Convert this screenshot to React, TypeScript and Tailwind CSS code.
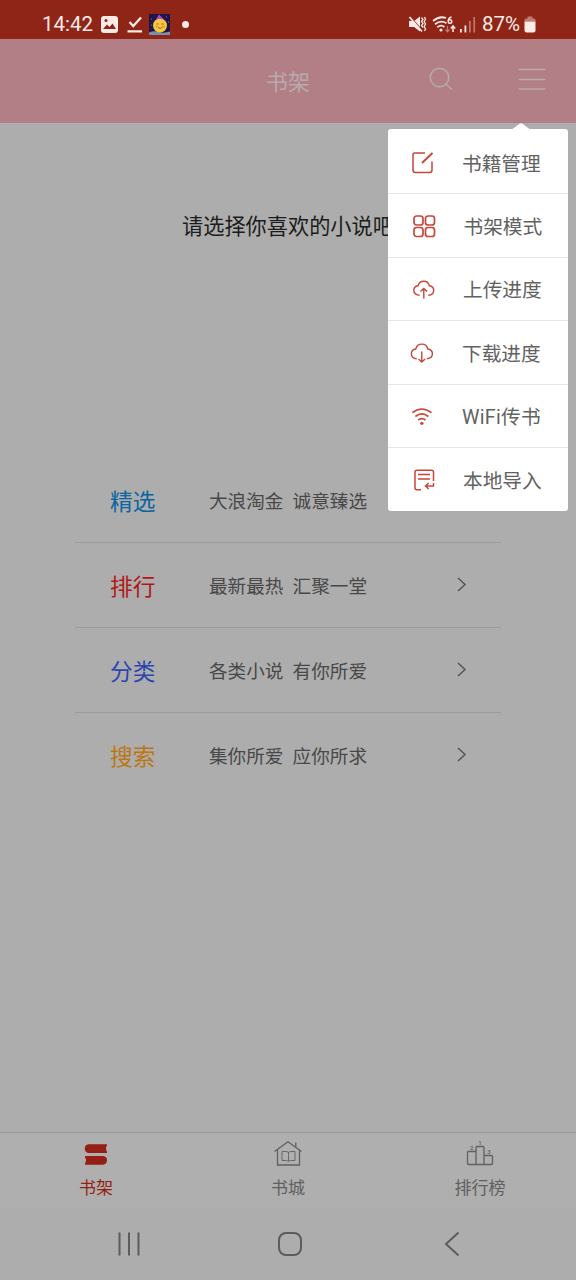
import React from 'react';
import type { ReactNode } from 'react';

interface MenuEntry {
  label: string;
  icon: ReactNode;
  className: string;
}

interface GuideEntry {
  title: string;
  desc: string;
  color: string;
  showArrow: boolean;
}

interface TabEntry {
  label: string;
  icon: ReactNode;
  color: string;
}

const menuEntries: MenuEntry[] = [
  {
    label: '书籍管理',
    className: 'h-[65px] pt-[3px] pl-[23px] gap-[27px]',
    icon: (
      <>
        <path d="M14 2H4Q2 2 2 4V19Q2 21.500 4.500 21.500H18.500Q21 21.500 21 19V10.500" />
        <path d="M11 12L21.500 2" strokeWidth="1.900" />
      </>
    ),
  },
  {
    label: '书架模式',
    className: 'h-[64px] pl-[24px] gap-[27.5px]',
    icon: (
      <g strokeWidth="1.700">
        <rect x="2" y="2" width="9" height="9" rx="2.500" />
        <rect x="13.500" y="2" width="9" height="9" rx="2.500" />
        <rect x="2" y="13.500" width="9" height="9" rx="2.500" />
        <rect x="13.500" y="13.500" width="9" height="9" rx="2.500" />
      </g>
    ),
  },
  {
    label: '上传进度',
    className: 'h-[63px] pl-[24px] gap-[27px]',
    icon: (
      <g strokeWidth="1.400">
        <path d="M7.500 18.200C4.300 18.200 1.800 16.200 1.800 13.500C1.800 10.900 3.500 9.100 6 8.800C6.700 5.800 8.900 4.200 11.700 4.200C14.600 4.200 16.800 5.900 17.400 8.800C20 9.100 21.700 10.900 21.700 13.500C21.700 16.200 19.500 18 16.300 18.200" />
        <path d="M11.800 21.500V11.500M8.500 14.600L11.800 11.500L15.100 14.600" />
      </g>
    ),
  },
  {
    label: '下载进度',
    className: 'h-[64px] pl-[22px] gap-[28px]',
    icon: (
      <g strokeWidth="1.400">
        <path d="M6.800 17.700C3.700 17.500 1.400 15.500 1.400 12.700C1.400 10.100 3.200 8.300 5.700 8C6.500 4.800 8.800 3.100 11.800 3.100C14.800 3.100 17.200 4.900 17.800 8C20.500 8.300 22.400 10.200 22.400 12.800C22.400 15.600 20.100 17.500 16.900 17.700" />
        <path d="M11.800 10.500V20.900M8.500 18.100L11.800 21.100L15.100 18.100" />
      </g>
    ),
  },
  {
    label: 'WiFi传书',
    className: 'h-[63px] pl-[22px] gap-[28px] tracking-[0.3px]',
    icon: (
      <g strokeWidth="1.700">
        <path d="M2.300 8.700Q11.900 1.300 21.500 8.700" />
        <path d="M5.400 12.500Q11.900 7.400 18.400 12.500" />
        <path d="M8.300 16Q11.900 13.100 15.500 16" />
        <circle cx="11.900" cy="19.300" r="1.600" fill="currentColor" stroke="none" />
      </g>
    ),
  },
  {
    label: '本地导入',
    className: 'h-[63px] pl-[24px] gap-[27px]',
    icon: (
      <>
        <path d="M21.500 13V4Q21.500 2.200 19.500 2.200H5Q3 2.200 3 4.200V19.800Q3 21.800 5 21.800H9" />
        <path d="M6 6.500H18M6 11H18" />
        <path d="M21.500 15V18H13.500M16.700 15L13.500 18L16.700 21" />
      </>
    ),
  },
];

const guideEntries: GuideEntry[] = [
  { title: '精选', desc: '大浪淘金  诚意臻选', color: 'text-[#0b64a0]', showArrow: false },
  { title: '排行', desc: '最新最热  汇聚一堂', color: 'text-[#b01818]', showArrow: true },
  { title: '分类', desc: '各类小说  有你所爱', color: 'text-[#2c45ae]', showArrow: true },
  { title: '搜索', desc: '集你所爱  应你所求', color: 'text-[#bd7512]', showArrow: true },
];

const tabs: TabEntry[] = [
  {
    label: '书架',
    color: 'text-[#951f14]',
    icon: (
      <g fill="currentColor" stroke="none">
        <path d="M7.500 4.300H26V5.300Q24 8.500 26 11.800V13H7.500Q3.800 12.500 3.800 8.600Q3.800 4.700 7.500 4.300Z" />
        <path d="M22 16H4V17.200Q6 20.200 4 23.400V24.700H22Q26 24.200 26 20.300Q26 16.500 22 16Z" />
      </g>
    ),
  },
  {
    label: '书城',
    color: 'text-[#606060]',
    icon: (
      <g strokeWidth="1.300">
        <path d="M1.500 11.500L15 1.800L28.500 11.500" />
        <path d="M4.500 10V25H26.500V10" />
        <path d="M22.800 7V2.500" />
        <path d="M9 11.500H13.500L15.500 12.300L17.500 11.500H22V20.500H17.500L15.500 21.300L13.500 20.500H9ZM15.500 12.300V21" strokeWidth="0.900" />
      </g>
    ),
  },
  {
    label: '排行榜',
    color: 'text-[#606060]',
    icon: (
      <g strokeWidth="1.300">
        <path d="M11 24.500H3.500Q2.500 24.500 2.500 23.500V12.500Q2.500 11.500 3.500 11.500H11" />
        <path d="M11 24.500V7.500Q11 6.500 12 6.500H18Q19 6.500 19 7.500V24.500Z" />
        <path d="M19 15.500H26.500Q27.500 15.500 27.500 16.500V23.500Q27.500 24.500 26.500 24.500H19" />
        <g fill="currentColor" stroke="none" fontFamily="Roboto, sans-serif" fontSize="6" fontWeight="500">
          <text x="5" y="10">2</text>
          <text x="13.300" y="5">1</text>
          <text x="22.300" y="14">3</text>
        </g>
      </g>
    ),
  },
];

function StatusBar() {
  return (
    <div className="flex h-[39px] items-start justify-between bg-[#8f2517] pl-[42px] pr-[40px] pt-[9px] text-[20.5px] leading-[30px] text-[#fbeae6]">
      <div className="flex h-[30px] items-center">
        <span className="w-[50px] whitespace-nowrap">14:42</span>
        <svg className="ml-[9px]" width="17" height="17" viewBox="0 0 17 17">
          <rect width="17" height="17" rx="3" fill="currentColor" />
          <path d="M2 13L6 8.500L8.500 11L11.500 7.500L15 13Z" fill="#8f2517" />
          <circle cx="5" cy="4.500" r="1.500" fill="#8f2517" />
        </svg>
        <svg className="ml-[9px]" width="16" height="18" viewBox="0 0 16 18" fill="none" stroke="currentColor" strokeWidth="2.300">
          <path d="M2.500 7L6.300 11L14 2.500M0.500 16.300H15" />
        </svg>
        <svg className="ml-[6px]" width="21" height="21" viewBox="0 0 21 21">
          <rect width="21" height="21" fill="#1f1548" />
          <path d="M0 18.500Q5 16.500 10 18T21 17.500V21H0Z" fill="#7791aa" />
          <circle cx="11" cy="11.500" r="7" fill="#f5c93d" />
          <path d="M7 5.500L10 0.500L15.500 6Q11 3.800 7 5.500Z" fill="#b64bc7" />
          <path d="M7.500 10H9.500M12.500 10H14.500M9 13.500Q11.500 15.500 13.500 13" stroke="#a45b24" fill="none" />
          <circle cx="7.500" cy="12.500" r="1" fill="#ee8b45" />
          <circle cx="15" cy="12.500" r="1" fill="#ee8b45" />
          <path d="M2 5H3M17 3H18M2 11H3M19 8H20" stroke="#7c75b7" />
        </svg>
        <span className="ml-[12px] size-[7px] rounded-full bg-[#fbeae6]" />
      </div>
      <div className="flex h-[30px] items-center">
        <svg width="18" height="18" viewBox="0 0 18 18" fill="none" stroke="currentColor" strokeWidth="1.700">
          <path d="M0 6H5L11 1.500V16.500L5 12H0Z" fill="currentColor" stroke="none" />
          <path d="M1.500 2L14 16.500" stroke="#8f2517" strokeWidth="1.200" />
          <path d="M0.500 2L13 16.500" />
          <path d="M12.500 2.500L14 4.500L12.500 6.500L14 8.500L12.500 10.500L14 12.500M15.500 2L16.500 4.500L15.200 6.500L16.500 9L15.200 11.500L16.500 14L15.500 16" strokeWidth="1.300" />
        </svg>
        <svg className="ml-[5px] mr-px" width="25" height="19" viewBox="0 0 25 19" fill="none" stroke="currentColor" strokeWidth="1.800">
          <path d="M1 6Q7.500 0.500 14 3M3 9.300Q9 4.500 14.500 8.200M5.300 12.300Q9 9.200 12.500 12" />
          <circle cx="9" cy="15" r="1.600" fill="currentColor" stroke="none" />
          <path d="M19.500 2Q16.500 2.500 16.200 6" strokeWidth="1.400" />
          <circle cx="18" cy="6.500" r="1.800" strokeWidth="1.400" />
          <path d="M15.500 11V16.500M13.500 14.500L15.500 16.800L17.500 14.500" strokeWidth="1.200" opacity="0.450" />
          <path d="M21 17V11.500M18.800 13.500L21 11L23.200 13.500" strokeWidth="1.500" />
        </svg>
        <svg className="ml-[2px] mr-px" width="16" height="17" viewBox="0 0 16 17" fill="currentColor">
          <rect y="13" width="1.800" height="3.500" />
          <rect x="4.500" y="9.500" width="1.800" height="7" />
          <rect x="9" y="5" width="1.800" height="11.500" opacity="0.400" />
          <rect x="13.300" y="1" width="1.800" height="15.500" opacity="0.400" />
        </svg>
        <span className="ml-[5px] mr-px w-[40px] whitespace-nowrap text-[20.5px]">87%</span>
        <svg className="ml-[1px]" width="12" height="17" viewBox="0 0 12 17" fill="currentColor">
          <path d="M3.500 0.500H8.500V2.500H10Q11.500 2.500 11.500 4V5.500H0.500V4Q0.500 2.500 2 2.500H3.500Z" opacity="0.450" />
          <path d="M0.500 5.500H11.500V14.500Q11.500 16.500 9.500 16.500H2.500Q0.500 16.500 0.500 14.500Z" />
        </svg>
      </div>
    </div>
  );
}

function Header() {
  return (
    <header className="grid h-[84px] grid-cols-3 items-center bg-[#b37f86] text-[#b6abac]">
      <h1 className="col-start-2 pt-[4px] text-center text-[22px] leading-[32px]">书架</h1>
      <div className="flex items-center justify-between pl-[44px] pr-[30.5px] pb-[4px]">
        <svg width="26" height="26" viewBox="0 0 26 26" fill="none" stroke="currentColor" strokeWidth="1.500">
          <circle cx="11.500" cy="11.500" r="9.300" />
          <path d="M18 18L24 23.500" />
        </svg>
        <svg width="28" height="24" viewBox="0 0 28 24" fill="none" stroke="currentColor" strokeWidth="1.500">
          <path d="M0.500 2.500H27.500M0.500 12.500H27.500M0.500 22H27.500" />
        </svg>
      </div>
    </header>
  );
}

function PopupMenu() {
  return (
    <div className="absolute left-[388px] top-[123px] w-[180px]">
      <svg className="ml-[124px] block" width="18" height="6" viewBox="0 0 18 6">
        <path d="M0.500 6L7.500 0.700Q9 -0.300 10.500 0.700L17.500 6Z" fill="#fff" />
      </svg>
      <ul className="overflow-hidden rounded-[3px] bg-white">
        {menuEntries.map((entry) => (
          <li
            key={entry.label}
            className={`flex items-center border-b border-[#e6e6e6] last:border-b-0 ${entry.className}`}
          >
            <svg
              className="shrink-0 text-[#c74638]"
              width="24"
              height="24"
              viewBox="0 0 24 24"
              fill="none"
              stroke="currentColor"
              strokeWidth="1.500"
            >
              {entry.icon}
            </svg>
            <span className="whitespace-nowrap pt-[4px] text-[19.7px] leading-[28px] text-[#626262]">
              {entry.label}
            </span>
          </li>
        ))}
      </ul>
    </div>
  );
}

function GuideList() {
  return (
    <ul className="mx-[75px] mt-[215px]">
      {guideEntries.map((entry) => (
        <li
          key={entry.title}
          className="flex h-[85px] items-center border-b border-[#9b9b9b] pl-[35px] pr-[34px] last:h-[84px] last:border-b-0"
        >
          <span className={`w-[99px] pt-[5px] text-[22.7px] leading-[32px] ${entry.color}`}>{entry.title}</span>
          <span className="whitespace-pre pt-[4px] text-[18.6px] leading-[28px] text-[#484848]">{entry.desc}</span>
          {entry.showArrow && (
            <svg className="ml-auto" width="10" height="16" viewBox="0 0 10 16" fill="none" stroke="#555" strokeWidth="1.500">
              <path d="M1 1L8 7.500L1 14" />
            </svg>
          )}
        </li>
      ))}
    </ul>
  );
}

function TabBar() {
  return (
    <nav className="grid h-[76px] grid-cols-3 border-t border-[#979797] bg-[#afafaf]">
      {tabs.map((tab) => (
        <div key={tab.label} className={`flex flex-col items-center pt-[7px] ${tab.color}`}>
          <svg width="30" height="27" viewBox="0 0 30 27" fill="none" stroke="currentColor">
            {tab.icon}
          </svg>
          <span className="mt-[9px] text-[17px] leading-[24px]">{tab.label}</span>
        </div>
      ))}
    </nav>
  );
}

function SystemNav() {
  return (
    <div className="flex h-[72px] items-center bg-[#adadad] pl-[117px] text-[#5c5c5c]">
      <svg width="24" height="26" viewBox="0 0 24 26" fill="none" stroke="currentColor" strokeWidth="2">
        <path d="M2.500 1.500V24.500M12 1.500V24.500M21.500 1.500V24.500" />
      </svg>
      <svg className="ml-[136px]" width="26" height="26" viewBox="0 0 26 26" fill="none" stroke="currentColor" strokeWidth="2">
        <rect x="2" y="2" width="22" height="22" rx="7" />
      </svg>
      <svg className="ml-[141px]" width="16" height="26" viewBox="0 0 16 26" fill="none" stroke="currentColor" strokeWidth="2">
        <path d="M14.500 1.500L2 13L14.500 24.500" />
      </svg>
    </div>
  );
}

export default function App() {
  return (
    <div className="relative flex h-[1280px] w-[576px] flex-col overflow-hidden bg-[#adadad] font-['Roboto','Noto_Sans_CJK_SC',sans-serif]">
      <StatusBar />
      <Header />
      <main className="flex-1">
        <p className="mt-[88px] text-center text-[21.2px] leading-[32px] text-[#1c1c1c]">请选择你喜欢的小说吧</p>
        <GuideList />
      </main>
      <TabBar />
      <SystemNav />
      <PopupMenu />
    </div>
  );
}
